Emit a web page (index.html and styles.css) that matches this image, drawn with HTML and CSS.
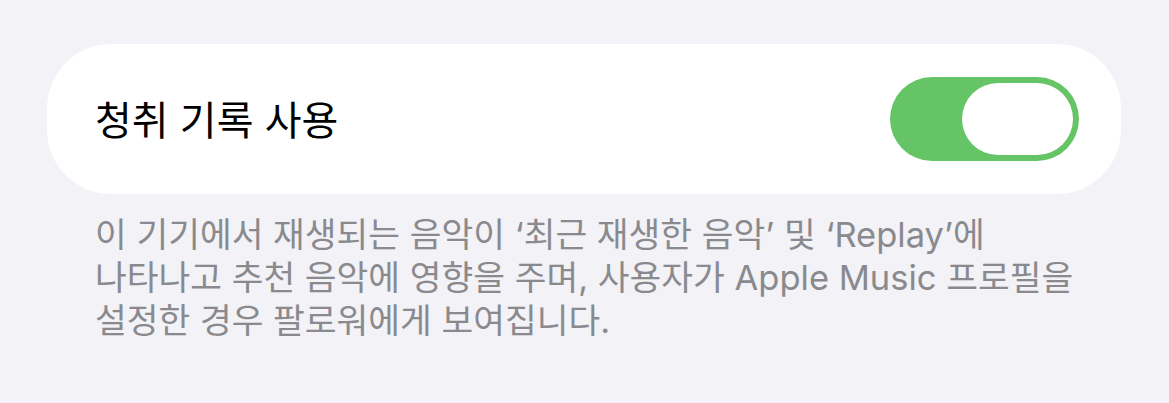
FILE: index.html
```html
<!DOCTYPE html>
<html lang="ko">
<head>
<meta charset="utf-8">
<title>청취 기록 사용</title>
<link rel="stylesheet" href="styles.css">
</head>
<body>
  <main class="settings">
    <section class="card">
      <span class="row-label">청취 기록 사용</span>
      <button class="switch is-on" type="button" role="switch" aria-checked="true" aria-label="청취 기록 사용">
        <span class="switch-knob"></span>
      </button>
    </section>
    <p class="footnote">이 기기에서 재생되는 음악이 ‘최근 재생한 음악’ 및 ‘Replay’에<br>나타나고 추천 음악에 영향을 주며, 사용자가 Apple Music 프로필을<br>설정한 경우 팔로워에게 보여집니다.</p>
  </main>
</body>
</html>
```
FILE: styles.css
```css
html, body {
  margin: 0;
  padding: 0;
  background: #f2f2f7;
}

body {
  font-family: Inter, "Noto Sans CJK KR", sans-serif;
  -webkit-font-smoothing: antialiased;
}

.settings {
  padding: 44px 48px 0 47px;
}

.card {
  height: 150px;
  box-sizing: border-box;
  background: #ffffff;
  border-radius: 64px;
  display: flex;
  align-items: center;
  justify-content: space-between;
  padding: 0 42px 0 48px;
}

.row-label {
  font-size: 40px;
  color: #000000;
  margin-top: -2px;
}

.switch {
  width: 189px;
  height: 84px;
  border: none;
  border-radius: 42px;
  background: #65c466;
  padding: 6px;
  box-sizing: border-box;
  display: flex;
  justify-content: flex-end;
  align-items: center;
  cursor: pointer;
}

.switch-knob {
  width: 111px;
  height: 72px;
  border-radius: 36px;
  background: #ffffff;
}

.footnote {
  margin: 19px 0 0 48px;
  font-size: 34.5px;
  line-height: 43px;
  color: #8a8a8e;
}
```
